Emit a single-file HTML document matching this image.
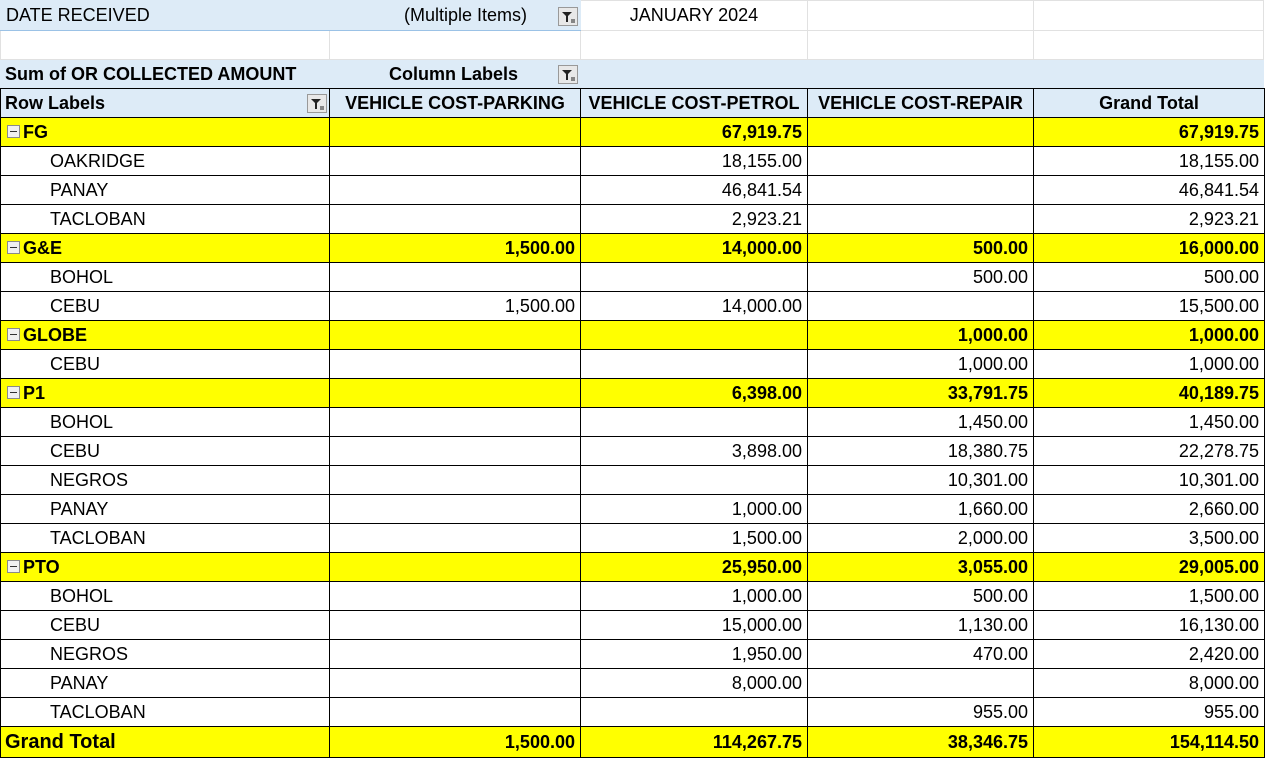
<!DOCTYPE html>
<html><head><meta charset="utf-8"><style>
body{margin:0;background:#fff;width:1265px;height:757px;overflow:hidden;font-family:"Liberation Sans",sans-serif;font-size:18px;color:#000}
table{border-collapse:collapse;table-layout:fixed;position:absolute;left:0;top:0}
td{padding:0 5px;white-space:nowrap;overflow:hidden;height:28px;position:relative;box-sizing:border-box}
.top td{border:1px solid #e1e1e1}
.blue{background:#ddebf7}
.main td{border:1px solid #000}
.h td{background:#ddebf7;font-weight:bold}
.y td{background:#ffff00;font-weight:bold}
.r{text-align:right}
.c{text-align:center}
.ind{padding-left:49px}
.f{position:absolute;right:2px;top:5px;width:20px;height:19px;background:#e8e8e8;border:1px solid #999;box-sizing:border-box}
.f svg{display:block}
.m{display:inline-block;width:13px;height:13px;border:1px solid #8a8a8a;background:#f0f0f0;box-sizing:border-box;vertical-align:0px;margin-right:3px;position:relative}
.m:after{content:"";position:absolute;left:2px;right:2px;top:5px;height:1px;background:#333}
</style></head><body>
<table class="top" style="width:1263px">
<colgroup><col style="width:329px"><col style="width:251px"><col style="width:227px"><col style="width:226px"><col style="width:230px"></colgroup>
<tr style="height:30px"><td class="blue" style="border-color:#ddebf7;border-bottom-color:#9bc2e6">DATE RECEIVED</td><td class="blue r" style="border-color:#ddebf7;border-bottom-color:#9bc2e6;padding-right:53px">(Multiple Items)<span class="f" style="top:6px"><svg width="18" height="17"><path d="M3 4h10l-4 4v6h-2v-6z" fill="#222"/><path d="M12 12h4M12 14h4" stroke="#222"/></svg></span></td><td class="c">JANUARY 2024</td><td></td><td></td></tr>
<tr style="height:29px"><td></td><td></td><td></td><td></td><td></td></tr>
<tr style="height:29px"><td class="blue" style="border-color:#ddebf7;font-weight:bold;padding-left:4px">Sum of OR COLLECTED AMOUNT</td><td class="blue" style="border-color:#ddebf7;font-weight:bold;padding-left:59px">Column Labels<span class="f"><svg width="18" height="17"><path d="M3 4h10l-4 4v6h-2v-6z" fill="#222"/><path d="M12 12h4M12 14h4" stroke="#222"/></svg></span></td><td class="blue" style="border-color:#ddebf7"></td><td class="blue" style="border-color:#ddebf7"></td><td class="blue" style="border-color:#ddebf7"></td></tr>
</table>
<table class="main" style="top:88px;width:1264px">
<colgroup><col style="width:329px"><col style="width:251px"><col style="width:227px"><col style="width:226px"><col style="width:231px"></colgroup>
<tr class="h" style="height:29px"><td style="padding-left:4px">Row Labels<span class="f"><svg width="18" height="17"><path d="M3 4h10l-4 4v6h-2v-6z" fill="#222"/><path d="M12 12h4M12 14h4" stroke="#222"/></svg></span></td><td class="c">VEHICLE COST-PARKING</td><td class="c">VEHICLE COST-PETROL</td><td class="c">VEHICLE COST-REPAIR</td><td class="c">Grand Total</td></tr>
<tr class="y" style="height:29px"><td style="padding-left:6px"><span class="m"></span>FG</td><td></td><td class="r">67,919.75</td><td></td><td class="r">67,919.75</td></tr>
<tr style="height:29px"><td class="ind">OAKRIDGE</td><td></td><td class="r">18,155.00</td><td></td><td class="r">18,155.00</td></tr>
<tr style="height:29px"><td class="ind">PANAY</td><td></td><td class="r">46,841.54</td><td></td><td class="r">46,841.54</td></tr>
<tr style="height:29px"><td class="ind">TACLOBAN</td><td></td><td class="r">2,923.21</td><td></td><td class="r">2,923.21</td></tr>
<tr class="y" style="height:29px"><td style="padding-left:6px"><span class="m"></span>G&amp;E</td><td class="r">1,500.00</td><td class="r">14,000.00</td><td class="r">500.00</td><td class="r">16,000.00</td></tr>
<tr style="height:29px"><td class="ind">BOHOL</td><td></td><td></td><td class="r">500.00</td><td class="r">500.00</td></tr>
<tr style="height:29px"><td class="ind">CEBU</td><td class="r">1,500.00</td><td class="r">14,000.00</td><td></td><td class="r">15,500.00</td></tr>
<tr class="y" style="height:29px"><td style="padding-left:6px"><span class="m"></span>GLOBE</td><td></td><td></td><td class="r">1,000.00</td><td class="r">1,000.00</td></tr>
<tr style="height:29px"><td class="ind">CEBU</td><td></td><td></td><td class="r">1,000.00</td><td class="r">1,000.00</td></tr>
<tr class="y" style="height:29px"><td style="padding-left:6px"><span class="m"></span>P1</td><td></td><td class="r">6,398.00</td><td class="r">33,791.75</td><td class="r">40,189.75</td></tr>
<tr style="height:29px"><td class="ind">BOHOL</td><td></td><td></td><td class="r">1,450.00</td><td class="r">1,450.00</td></tr>
<tr style="height:29px"><td class="ind">CEBU</td><td></td><td class="r">3,898.00</td><td class="r">18,380.75</td><td class="r">22,278.75</td></tr>
<tr style="height:29px"><td class="ind">NEGROS</td><td></td><td></td><td class="r">10,301.00</td><td class="r">10,301.00</td></tr>
<tr style="height:29px"><td class="ind">PANAY</td><td></td><td class="r">1,000.00</td><td class="r">1,660.00</td><td class="r">2,660.00</td></tr>
<tr style="height:29px"><td class="ind">TACLOBAN</td><td></td><td class="r">1,500.00</td><td class="r">2,000.00</td><td class="r">3,500.00</td></tr>
<tr class="y" style="height:29px"><td style="padding-left:6px"><span class="m"></span>PTO</td><td></td><td class="r">25,950.00</td><td class="r">3,055.00</td><td class="r">29,005.00</td></tr>
<tr style="height:29px"><td class="ind">BOHOL</td><td></td><td class="r">1,000.00</td><td class="r">500.00</td><td class="r">1,500.00</td></tr>
<tr style="height:29px"><td class="ind">CEBU</td><td></td><td class="r">15,000.00</td><td class="r">1,130.00</td><td class="r">16,130.00</td></tr>
<tr style="height:29px"><td class="ind">NEGROS</td><td></td><td class="r">1,950.00</td><td class="r">470.00</td><td class="r">2,420.00</td></tr>
<tr style="height:29px"><td class="ind">PANAY</td><td></td><td class="r">8,000.00</td><td></td><td class="r">8,000.00</td></tr>
<tr style="height:29px"><td class="ind">TACLOBAN</td><td></td><td></td><td class="r">955.00</td><td class="r">955.00</td></tr>
<tr class="y" style="height:31px"><td style="padding-left:4px;font-size:20px">Grand Total</td><td class="r">1,500.00</td><td class="r">114,267.75</td><td class="r">38,346.75</td><td class="r">154,114.50</td></tr>
</table>
</body></html>
